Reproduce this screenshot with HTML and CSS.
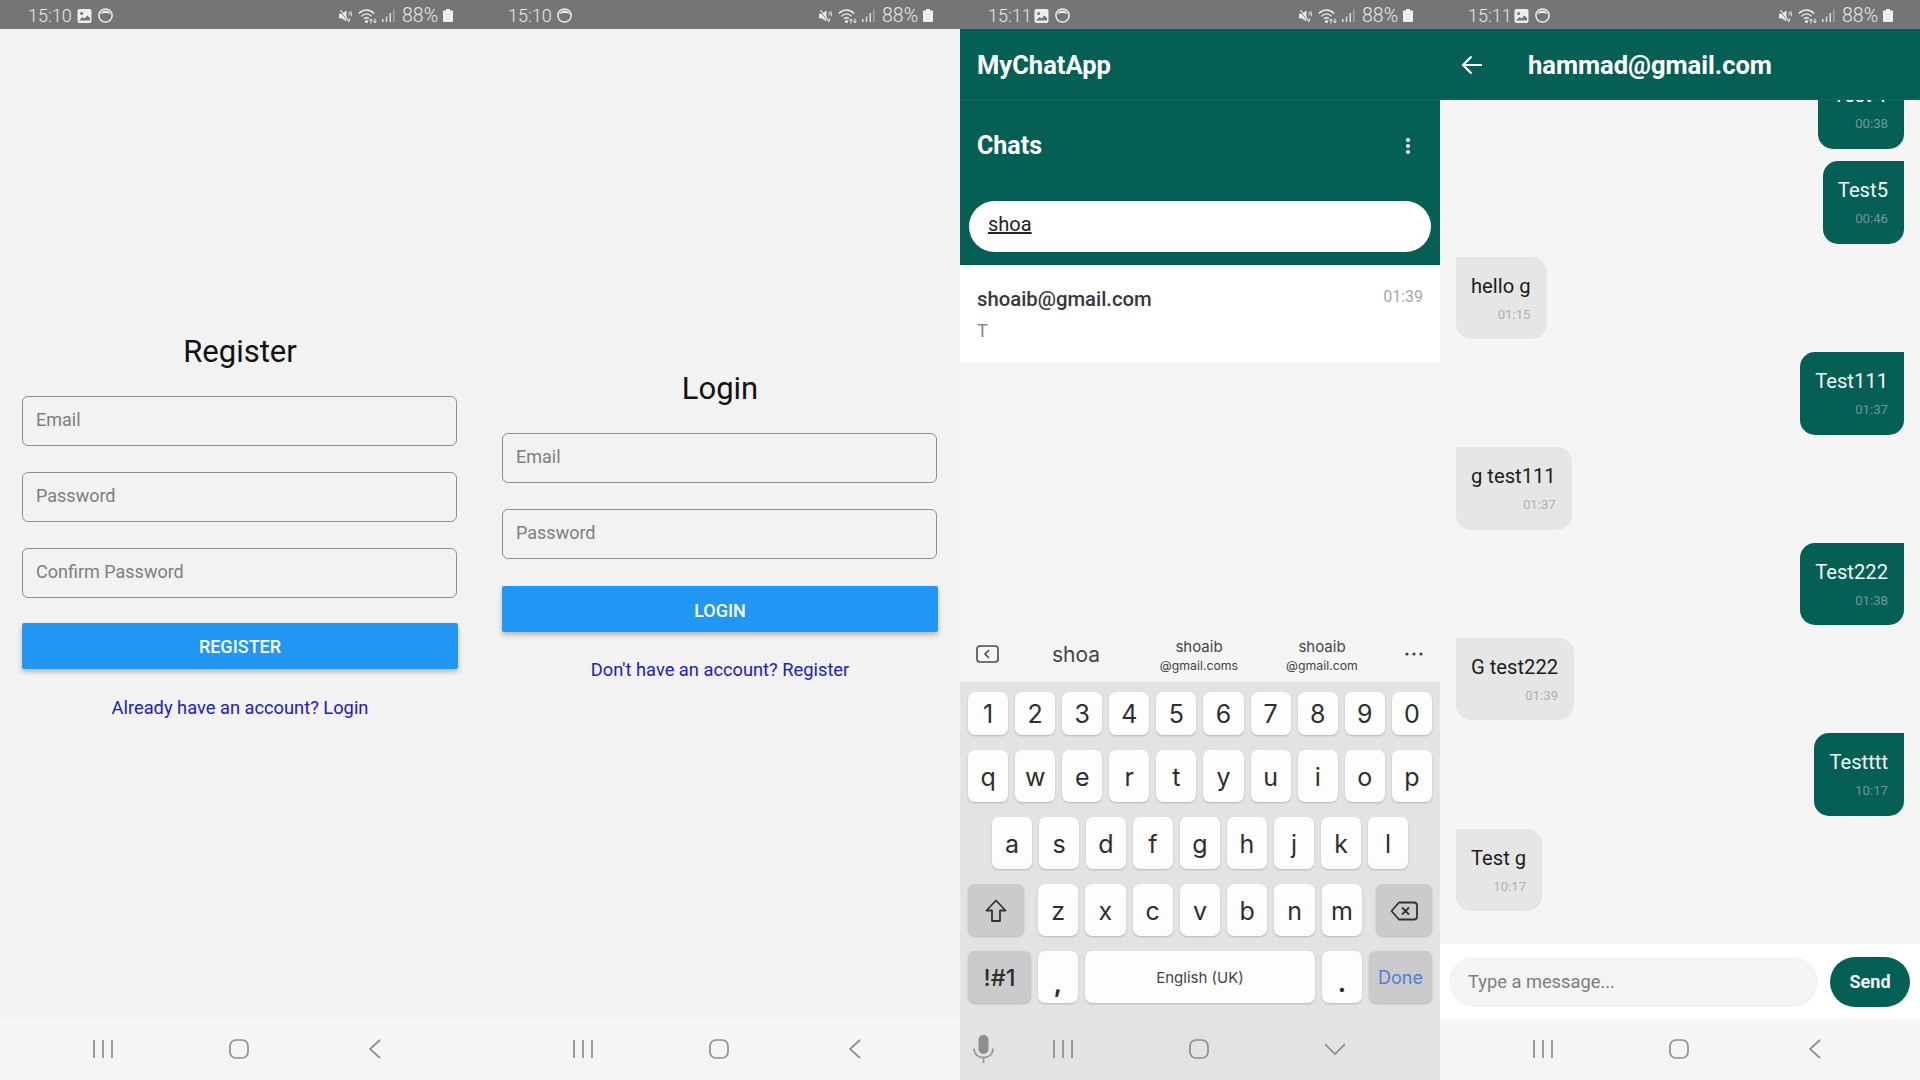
FILE: index.html
```html
<!DOCTYPE html>
<html lang="en">
  <head>
    <meta charset="UTF-8" />
    <meta name="viewport" content="width=device-width, initial-scale=1.0" />
    <title>MyChatApp</title>
    <link rel="stylesheet" href="styles.css">
  </head>
  <body>
    <svg class="sprites" aria-hidden="true">
      <symbol id="i-image" viewBox="0 0 15 14">
        <rect x="0.5" y="0" width="14" height="14" rx="2" fill="#eee" />
        <circle cx="4.6" cy="4.4" r="1.5" fill="#757575" />
        <path d="M2 11.5 5.5 8 7.5 9.6 10.4 6.4 13 9v2.5z" fill="#757575" />
      </symbol>
      <symbol id="i-circle" viewBox="0 0 15 15">
        <circle cx="7.5" cy="7.5" r="6.6" fill="none" stroke="#eee" stroke-width="1.5" />
        <path d="M2.4 6.2a5.4 5.4 0 0 1 10.2 0c-1.6-1-3.2-1.3-5.1-1.3s-3.5.3-5.1 1.3z" fill="#eee" />
      </symbol>
      <symbol id="i-mute" viewBox="0 0 14 14">
        <path d="M0 4.5h3L8 1v12L3 9.5H0z" fill="#eee" />
        <path d="M1 1l9 12" stroke="#757575" stroke-width="1.4" />
        <path d="M1.5 0.5l9.5 12.5" stroke="#eee" stroke-width="1.2" />
        <path d="M10.5 3c1 1.2 1 2 .4 3M12.5 2c1 1.8 1.1 3.5.4 5M11 9.5c.6.8.5 1.7 0 2.5" fill="none" stroke="#eee" stroke-width="1.1" />
      </symbol>
      <symbol id="i-wifi" viewBox="0 0 20 16">
        <g fill="none" stroke="#eee" stroke-width="1.3">
          <path d="M.8 5.5C5.5.8 11.5.8 16.2 5.5" />
          <path d="M3.5 8.2c3.2-3 6.8-3 10 0" />
          <path d="M6 10.8c1.8-1.5 3.2-1.5 5 0" />
        </g>
        <circle cx="8.5" cy="13.6" r="1.5" fill="#eee" />
        <path d="M13 15.5v-4M11.6 12.8 13 11l1.4 1.8M17 10.5v4M15.6 13 17 14.8 18.4 13" fill="none" stroke="#eee" stroke-width="1" />
      </symbol>
      <symbol id="i-signal" viewBox="0 0 13 13">
        <path d="M0 10h1.5v3H0zM3.8 7.5h1.5V13H3.8zM7.5 4H9v9H7.5z" fill="#ddd" />
        <path d="M11.2 0h1.3v13h-1.3z" fill="#aaa" />
      </symbol>
      <symbol id="i-battery" viewBox="0 0 10 13">
        <path d="M3 0h4v1.5h2a1 1 0 0 1 1 1V12a1 1 0 0 1-1 1H1a1 1 0 0 1-1-1V2.5a1 1 0 0 1 1-1h2z" fill="#eee" />
      </symbol>
      <symbol id="i-recents" viewBox="0 0 20 20">
        <path d="M1 1v18M10 1v18M19 1v18" fill="none" stroke="#8d8d8d" stroke-width="1.7" />
      </symbol>
      <symbol id="i-home" viewBox="0 0 20 20">
        <rect x="1" y="1" width="18" height="18" rx="6" fill="none" stroke="#8d8d8d" stroke-width="1.7" />
      </symbol>
      <symbol id="i-back" viewBox="0 0 20 20">
        <path d="M15 1 5 10l10 9" fill="none" stroke="#8d8d8d" stroke-width="1.7" />
      </symbol>
      <symbol id="i-down" viewBox="0 0 20 20">
        <path d="M0 5l10 10L20 5" fill="none" stroke="#8d8d8d" stroke-width="1.7" />
      </symbol>
    </svg>

    <!-- register -->
    <section class="phone">
      <div class="status">
        <span class="status-time">15:10</span>
        <svg class="ic-image"><use href="#i-image" /></svg>
        <svg class="ic-circle"><use href="#i-circle" /></svg>
        <div class="status-right">
          <svg class="ic-mute"><use href="#i-mute" /></svg>
          <svg class="ic-wifi"><use href="#i-wifi" /></svg>
          <svg class="ic-signal"><use href="#i-signal" /></svg>
          <span class="status-pct">88%</span>
          <svg class="ic-battery"><use href="#i-battery" /></svg>
        </div>
      </div>
      <main class="auth">
        <h1>Register</h1>
        <input type="text" placeholder="Email" />
        <input type="password" placeholder="Password" />
        <input type="password" placeholder="Confirm Password" />
        <button class="auth-btn">REGISTER</button>
        <a class="auth-link">Already have an account? Login</a>
      </main>
      <nav class="navbar">
        <svg><use href="#i-recents" /></svg>
        <svg><use href="#i-home" /></svg>
        <svg><use href="#i-back" /></svg>
      </nav>
    </section>

    <!-- login -->
    <section class="phone">
      <div class="status">
        <span class="status-time">15:10</span>
        <svg class="ic-circle"><use href="#i-circle" /></svg>
        <div class="status-right">
          <svg class="ic-mute"><use href="#i-mute" /></svg>
          <svg class="ic-wifi"><use href="#i-wifi" /></svg>
          <svg class="ic-signal"><use href="#i-signal" /></svg>
          <span class="status-pct">88%</span>
          <svg class="ic-battery"><use href="#i-battery" /></svg>
        </div>
      </div>
      <main class="auth auth-login">
        <h1>Login</h1>
        <input type="text" placeholder="Email" />
        <input type="password" placeholder="Password" />
        <button class="auth-btn">LOGIN</button>
        <a class="auth-link">Don't have an account? Register</a>
      </main>
      <nav class="navbar">
        <svg><use href="#i-recents" /></svg>
        <svg><use href="#i-home" /></svg>
        <svg><use href="#i-back" /></svg>
      </nav>
    </section>

    <!-- chat list with keyboard -->
    <section class="phone phone-light">
      <div class="status">
        <span class="status-time">15:11</span>
        <svg class="ic-image"><use href="#i-image" /></svg>
        <svg class="ic-circle"><use href="#i-circle" /></svg>
        <div class="status-right">
          <svg class="ic-mute"><use href="#i-mute" /></svg>
          <svg class="ic-wifi"><use href="#i-wifi" /></svg>
          <svg class="ic-signal"><use href="#i-signal" /></svg>
          <span class="status-pct">88%</span>
          <svg class="ic-battery"><use href="#i-battery" /></svg>
        </div>
      </div>
      <header class="appbar">MyChatApp</header>
      <div class="chats-head">
        <div class="chats-title">
          <span>Chats</span>
          <svg class="kebab" viewBox="0 0 6 18" fill="#fff">
            <circle cx="3" cy="3" r="2" />
            <circle cx="3" cy="9" r="2" />
            <circle cx="3" cy="15" r="2" />
          </svg>
        </div>
        <div class="search"><u>shoa</u></div>
      </div>
      <div class="chat-list">
        <div class="chat-row">
          <div>
            <div class="chat-name">shoaib@gmail.com</div>
            <div class="chat-last">T</div>
          </div>
          <span class="chat-time">01:39</span>
        </div>
      </div>
      <div class="suggest">
        <svg class="suggest-icon" viewBox="0 0 23 18" fill="none" stroke="#4a4a4a" stroke-width="1.6">
          <rect x="1" y="1" width="21" height="16" rx="3" />
          <path d="M13 5l-4 4 4 4" />
        </svg>
        <span class="suggest-main">shoa</span>
        <span class="suggest-two">shoaib<small>@gmail.coms</small></span>
        <span class="suggest-two">shoaib<small>@gmail.com</small></span>
        <svg class="suggest-more" viewBox="0 0 18 4" fill="#444">
          <circle cx="2" cy="2" r="1.6" />
          <circle cx="9" cy="2" r="1.6" />
          <circle cx="16" cy="2" r="1.6" />
        </svg>
      </div>
      <div class="keyboard">
        <div class="key-row key-row-short">
          <span class="key">1</span><span class="key">2</span><span class="key">3</span><span class="key">4</span><span class="key">5</span>
          <span class="key">6</span><span class="key">7</span><span class="key">8</span><span class="key">9</span><span class="key">0</span>
        </div>
        <div class="key-row">
          <span class="key">q</span><span class="key">w</span><span class="key">e</span><span class="key">r</span><span class="key">t</span>
          <span class="key">y</span><span class="key">u</span><span class="key">i</span><span class="key">o</span><span class="key">p</span>
        </div>
        <div class="key-row key-row-inset">
          <span class="key">a</span><span class="key">s</span><span class="key">d</span><span class="key">f</span><span class="key">g</span>
          <span class="key">h</span><span class="key">j</span><span class="key">k</span><span class="key">l</span>
        </div>
        <div class="key-row">
          <span class="key key-fn key-side">
            <svg width="22" height="24" viewBox="0 0 22 24" fill="none" stroke="#333" stroke-width="1.8" stroke-linejoin="round"><path d="M11 1.5 1.5 11.5H7V22h8V11.5h5.5z" /></svg>
          </span>
          <div class="key-group">
            <span class="key">z</span><span class="key">x</span><span class="key">c</span><span class="key">v</span>
            <span class="key">b</span><span class="key">n</span><span class="key">m</span>
          </div>
          <span class="key key-fn key-side">
            <svg width="28" height="20" viewBox="0 0 28 20" fill="none" stroke="#333" stroke-width="1.8" stroke-linejoin="round"><path d="M9 1.5h15a3 3 0 0 1 3 3v11a3 3 0 0 1-3 3H9L1.5 10z" /><path d="M12 6.5l7 7M19 6.5l-7 7" /></svg>
          </span>
        </div>
        <div class="key-row">
          <span class="key key-fn key-sym">!#1</span>
          <span class="key key-punct">,</span>
          <span class="key key-space">English (UK)</span>
          <span class="key key-punct">.</span>
          <span class="key key-fn key-done">Done</span>
        </div>
      </div>
      <nav class="navbar navbar-kb">
        <svg class="mic" viewBox="0 0 21 28">
          <rect x="5.5" y="0" width="10" height="19" rx="5" fill="#8d8d8d" />
          <path d="M1 13.5c0 5.5 4 9 9.5 9s9.5-3.5 9.5-9M10.5 22.5V28" fill="none" stroke="#9a9a9a" stroke-width="1.8" />
        </svg>
        <svg><use href="#i-recents" /></svg>
        <svg><use href="#i-home" /></svg>
        <svg><use href="#i-down" /></svg>
      </nav>
    </section>

    <!-- conversation -->
    <section class="phone phone-light">
      <div class="status">
        <span class="status-time">15:11</span>
        <svg class="ic-image"><use href="#i-image" /></svg>
        <svg class="ic-circle"><use href="#i-circle" /></svg>
        <div class="status-right">
          <svg class="ic-mute"><use href="#i-mute" /></svg>
          <svg class="ic-wifi"><use href="#i-wifi" /></svg>
          <svg class="ic-signal"><use href="#i-signal" /></svg>
          <span class="status-pct">88%</span>
          <svg class="ic-battery"><use href="#i-battery" /></svg>
        </div>
      </div>
      <header class="appbar appbar-chat">
        <svg class="back-arrow" viewBox="0 0 22 20" fill="none" stroke="#fff" stroke-width="2.2">
          <path d="M21 10H2M10.5 1.5 2 10l8.5 8.5" />
        </svg>
        <span>hammad@gmail.com</span>
      </header>
      <div class="messages">
        <div class="bubble sent">Test 1<time>00:38</time></div>
        <div class="bubble sent">Test5<time>00:46</time></div>
        <div class="bubble recv">hello g<time>01:15</time></div>
        <div class="bubble sent">Test111<time>01:37</time></div>
        <div class="bubble recv">g test111<time>01:37</time></div>
        <div class="bubble sent">Test222<time>01:38</time></div>
        <div class="bubble recv">G test222<time>01:39</time></div>
        <div class="bubble sent">Testttt<time>10:17</time></div>
        <div class="bubble recv">Test g<time>10:17</time></div>
      </div>
      <div class="composer">
        <input type="text" placeholder="Type a message..." />
        <button>Send</button>
      </div>
      <nav class="navbar">
        <svg><use href="#i-recents" /></svg>
        <svg><use href="#i-home" /></svg>
        <svg><use href="#i-back" /></svg>
      </nav>
    </section>
  </body>
</html>
```

FILE: styles.css
```css
* {
  box-sizing: border-box;
}
body {
  margin: 0;
  display: flex;
  width: 1920px;
  height: 1080px;
  overflow: hidden;
  font-family: Roboto, "Liberation Sans", sans-serif;
}
.sprites {
  width: 0;
  height: 0;
  position: absolute;
}
.phone {
  width: 480px;
  height: 1080px;
  display: flex;
  flex-direction: column;
  background-color: #f2f2f2;
}
.phone-light {
  background-color: #f5f5f6;
}

/* status bar */
.status {
  height: 29px;
  flex: none;
  display: flex;
  align-items: center;
  padding: 2px 27px 0 28px;
  background-color: #757575;
  color: #e8e8e8;
}
.status-time {
  font-size: 18px;
  font-weight: 300;
  width: 49px;
}
.phone-light .status-time {
  width: 46px;
}
.ic-image {
  width: 15px;
  height: 14px;
  margin-right: 6px;
}
.ic-circle {
  width: 15px;
  height: 15px;
}
.status-right {
  margin-left: auto;
  display: flex;
  align-items: center;
}
.ic-mute {
  width: 13px;
  height: 14px;
  margin-right: 6px;
}
.ic-wifi {
  width: 20px;
  height: 16px;
  margin-right: 4px;
}
.ic-signal {
  width: 13px;
  height: 13px;
  margin-right: 7px;
}
.status-pct {
  font-size: 19.5px;
  font-weight: 300;
  width: 41px;
}
.ic-battery {
  width: 10px;
  height: 13px;
}

/* register + login */
.auth {
  flex: 1;
  display: flex;
  flex-direction: column;
  justify-content: center;
  padding: 0 22px;
}
.auth h1 {
  margin: 0 0 26px;
  padding-top: 2px;
  font-size: 31px;
  line-height: 37px;
  font-weight: 400;
  text-align: center;
  color: #111;
}
.auth input {
  height: 50px;
  flex: none;
  margin: 0 1px 26px 0;
  padding: 0 13px 3px;
  border: 1.5px solid #8f8f8f;
  border-radius: 6px;
  background: none;
  font-family: inherit;
  font-size: 18px;
  outline: none;
}
.auth input::placeholder,
.composer input::placeholder {
  color: #7e7e7e;
  opacity: 1;
}
.auth-btn {
  height: 46px;
  flex: none;
  margin: -1px 0 28px;
  padding: 2px 0 0;
  border: none;
  border-radius: 2px;
  background-color: #2196f3;
  color: #fff;
  font-family: inherit;
  font-size: 18px;
  font-weight: 500;
  box-shadow: 0 3px 5px rgba(0, 0, 0, 0.25);
}
.auth-link {
  font-size: 18.3px;
  line-height: 21px;
  text-align: center;
  color: #2020b8;
}
.auth-login .auth-btn {
  margin: 1px 0 27px;
}

/* bottom nav */
.navbar {
  height: 61px;
  flex: none;
  display: flex;
  align-items: center;
  gap: 116px;
  padding: 0 0 2px 93px;
  background-color: #f5f5f7;
}
.navbar svg {
  width: 20px;
  height: 20px;
}
.navbar-kb {
  padding-left: 13px;
  background-color: #e3e3e5;
}
.navbar .mic {
  width: 21px;
  height: 28px;
  margin-right: -57px;
}

/* green bars */
.appbar {
  height: 71px;
  flex: none;
  display: flex;
  align-items: center;
  padding: 1px 0 0 17px;
  background-color: #065f55;
  border-bottom: 1px solid #0a6a5f;
  color: #fff;
  font-size: 25.5px;
  font-weight: 700;
  position: relative;
  z-index: 1;
}
.appbar-chat {
  padding-left: 21px;
}
.back-arrow {
  width: 22px;
  height: 20px;
  margin-right: 45px;
}
.chats-head {
  height: 165px;
  flex: none;
  padding: 0 9px;
  background-color: #065f55;
}
.chats-title {
  height: 91px;
  margin-bottom: 10px;
  display: flex;
  align-items: center;
  justify-content: space-between;
  padding: 0 20px 0 8px;
  color: #fff;
  font-size: 25px;
  font-weight: 700;
}
.kebab {
  width: 6px;
  height: 18px;
}
.search {
  height: 51px;
  display: flex;
  align-items: center;
  padding: 0 19px 6px;
  border-radius: 26px;
  background-color: #fff;
  color: #222;
  font-size: 20px;
}
.chat-list {
  flex: 1;
}
.chat-row {
  height: 97px;
  display: flex;
  justify-content: space-between;
  padding: 23px 17px 0 17px;
  background-color: #fff;
}
.chat-name {
  font-size: 20.3px;
  line-height: 23px;
  font-weight: 500;
  color: #383838;
}
.chat-last {
  margin-top: 9px;
  font-size: 18px;
  line-height: 21px;
  color: #888;
}
.chat-time {
  font-size: 16px;
  line-height: 17px;
  color: #a8a8a8;
}

/* keyboard */
.suggest {
  height: 54px;
  flex: none;
  display: grid;
  grid-template-columns: 54px 124px 122px 124px 56px;
  align-items: center;
  justify-items: center;
  font-family: Inter, Roboto, sans-serif;
  color: #444;
}
.suggest-icon {
  width: 23px;
  height: 18px;
  margin-bottom: 2px;
}
.suggest-main {
  margin-bottom: 2px;
  font-size: 21px;
}
.suggest-two {
  display: flex;
  flex-direction: column;
  align-items: center;
  margin-top: 2px;
  font-size: 15px;
  line-height: 19px;
}
.suggest-two small {
  font-size: 12.3px;
}
.suggest-more {
  width: 18px;
  height: 4px;
  margin: 0 0 2px 4px;
}
.keyboard {
  flex: none;
  display: flex;
  flex-direction: column;
  gap: 15px;
  height: 337px;
  padding: 10px 8px 0;
  background-color: #e3e3e5;
  font-family: Inter, Roboto, sans-serif;
  color: #2e2e2e;
}
.key-row {
  height: 52px;
  display: flex;
  gap: 7px;
}
.key-row-short {
  height: 43px;
}
.key-row-inset {
  padding: 0 24px;
}
.key {
  flex: 1;
  display: flex;
  align-items: center;
  justify-content: center;
  padding-top: 1px;
  border-radius: 7px;
  background-color: #fdfdfe;
  font-size: 25px;
  box-shadow: 0 1px 2px rgba(0, 0, 0, 0.2);
}
.key-group {
  flex: 1;
  display: flex;
  gap: 7px;
  margin: 0 7px;
}
.key-fn {
  background-color: #cbcbcd;
}
.key-side {
  flex: 0 0 56px;
}
.key-sym {
  flex: 0 0 63px;
  font-size: 23.5px;
  font-weight: 500;
}
.key-punct {
  flex: 0 0 40px;
  align-items: flex-end;
  padding-bottom: 5px;
  font-weight: 700;
  font-size: 25px;
}
.key-space {
  flex: 1;
  font-size: 15px;
  color: #444;
}
.key-done {
  flex: 0 0 63px;
  font-size: 18px;
  color: #4f7fd4;
}

/* conversation */
.messages {
  flex: 1;
  min-height: 0;
  overflow: hidden;
  display: flex;
  flex-direction: column;
  justify-content: flex-end;
  gap: 12.8px;
  padding: 0 16px 33px;
}
.bubble {
  flex: none;
  height: 82.5px;
  display: flex;
  flex-direction: column;
  padding: 17px 16px 0 15px;
  font-size: 20.2px;
  line-height: 24px;
}
.bubble time {
  align-self: flex-end;
  margin-top: 9px;
  font-size: 13.2px;
  line-height: 16px;
}
.sent {
  align-self: flex-end;
  border-radius: 15px 0 15px 15px;
  background-color: #065f55;
  color: #f2f7f6;
}
.sent time {
  color: #6f9a93;
}
.recv {
  align-self: flex-start;
  border-radius: 0 15px 15px 15px;
  background-color: #e6e6e6;
  color: #1c1c1c;
}
.recv time {
  color: #b0b0b0;
}
.composer {
  height: 75px;
  flex: none;
  display: flex;
  align-items: center;
  gap: 12px;
  padding: 0 10px 0 9px;
  background-color: #fff;
}
.composer input {
  flex: 1;
  min-width: 0;
  height: 50px;
  padding: 0 19px;
  border: none;
  border-radius: 25px;
  background-color: #f4f4f5;
  font-family: inherit;
  font-size: 18.3px;
  outline: none;
}
.composer button {
  width: 80px;
  height: 50px;
  border: none;
  border-radius: 25px;
  background-color: #065f55;
  color: #f2f7f6;
  font-family: inherit;
  font-size: 18px;
  font-weight: 700;
}
```
